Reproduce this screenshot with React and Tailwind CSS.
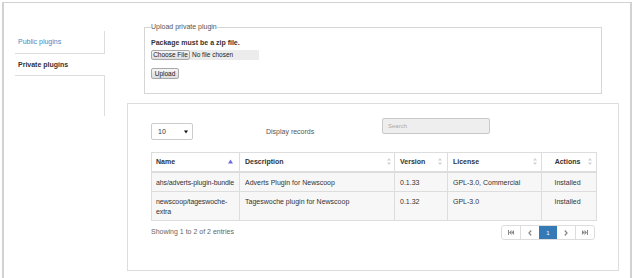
import React from "react";

const ROWS = [
  {
    name: "ahs/adverts-plugin-bundle",
    description: "Adverts Plugin for Newscoop",
    version: "0.1.33",
    license: "GPL-3.0, Commercial",
    action: "Installed",
    tall: false,
  },
  {
    name: "newscoop/tageswoche-extra",
    description: "Tageswoche plugin for Newscoop",
    version: "0.1.32",
    license: "GPL-3.0",
    action: "Installed",
    tall: true,
  },
];

function SortBoth() {
  return (
    <svg width="4" height="7" viewBox="0 0 4 7" className="shrink-0">
      <path d="M2 0 L4 2.6 L0 2.6 Z" fill="#d2d2d2" />
      <path d="M2 7 L4 4.4 L0 4.4 Z" fill="#d2d2d2" />
    </svg>
  );
}

function SortAsc() {
  return (
    <svg width="5" height="5" viewBox="0 0 5 5" className="shrink-0">
      <path d="M2.5 0.5 L5 4.5 L0 4.5 Z" fill="#6c6cd9" />
    </svg>
  );
}

function PageIcon({ kind }) {
  const c = "#8a8a8a";
  if (kind === "first")
    return (
      <svg width="6" height="5" viewBox="0 0 6 5">
        <rect x="0" y="0" width="1" height="5" fill={c} />
        <path d="M1 2.5 L3.5 0 L3.5 5 Z" fill={c} />
        <path d="M3.5 2.5 L6 0 L6 5 Z" fill={c} />
      </svg>
    );
  if (kind === "last")
    return (
      <svg width="6" height="5" viewBox="0 0 6 5">
        <path d="M0 0 L2.5 2.5 L0 5 Z" fill={c} />
        <path d="M2.5 0 L5 2.5 L2.5 5 Z" fill={c} />
        <rect x="5" y="0" width="1" height="5" fill={c} />
      </svg>
    );
  if (kind === "prev")
    return (
      <svg width="4" height="6" viewBox="0 0 4 6">
        <path d="M3.2 0.5 L1 3 L3.2 5.5" stroke={c} strokeWidth="1.3" fill="none" />
      </svg>
    );
  return (
    <svg width="4" height="6" viewBox="0 0 4 6">
      <path d="M0.8 0.5 L3 3 L0.8 5.5" stroke={c} strokeWidth="1.3" fill="none" />
    </svg>
  );
}

export default function App() {
  return (
    <div className="w-[635px] h-[278px] overflow-hidden bg-white font-['Liberation_Sans',Arial,sans-serif] text-[7px] leading-[10px] text-[#333]">
      <div className="ml-[2px] mt-[2px] w-[630px] h-[300px] border-l-2 border-t border-r-2 border-[#d2d2d2] flex">
        {/* side tabs */}
        <nav className="ml-[11px] mt-[28px] w-[90px] shrink-0">
          <div className="h-[23px] border-b border-r border-[#ddd] flex items-center pl-[3px] text-[#428bca]">
            Public plugins
          </div>
          <div className="h-[22px] border-b border-[#ddd] flex items-center pl-[3px] font-bold">
            Private plugins
          </div>
          <div className="h-[40px] border-r border-[#ddd]"></div>
        </nav>

        <main className="ml-[22px] w-[492px] shrink-0">
          <fieldset className="mt-[19px] ml-[17px] w-[458px] border border-[#d6d6d6] px-[6px] pb-[14px]">
            <legend className="px-0 text-[#555] leading-[10px]">Upload private plugin</legend>
            <p className="mt-[6px] font-bold">Package must be a zip file.</p>
            <div className="mt-[2px] flex h-[10px]">
              <button className="w-[39px] h-[10px] border border-[#a9a9a9] rounded-[2px] bg-gradient-to-b from-[#f6f6f6] to-[#dcdcdc] text-[6.5px] leading-[8px] text-[#222]">
                Choose File
              </button>
              <span className="w-[69px] h-[10px] bg-[#ececec] pl-[2px] text-[6.5px] leading-[10px] text-[#222]">
                No file chosen
              </span>
            </div>
            <button className="mt-[8px] block w-[28px] h-[11px] border border-[#a9a9a9] rounded-[2px] bg-gradient-to-b from-[#f6f6f6] to-[#dcdcdc] text-[6.5px] leading-[9px] text-[#222]">
              Upload
            </button>
          </fieldset>

          <section className="mt-[9px] w-[492px] h-[168px] border border-[#ddd] pl-[23px] pt-[14px]">
            <div className="flex items-start">
              <div className="mt-[5px] w-[42px] h-[17px] border border-[#ccc] rounded-[2px] flex items-center justify-between pl-[6px] pr-[4px]">
                <span>10</span>
                <svg width="4" height="4" viewBox="0 0 4 4">
                  <path d="M0 0.5 L4 0.5 L2 3.5 Z" fill="#111" />
                </svg>
              </div>
              <span className="ml-[73px] mt-[9px] w-[116px] text-[#555]">Display records</span>
              <div className="w-[108px] h-[16px] border border-[#c8c8c8] rounded-[2px] bg-[#eeeeee] pl-[5px] flex items-center text-[6px] text-[#aaa]">
                Search
              </div>
            </div>

            <table className="mt-[12px] w-[445px] table-fixed border-collapse border border-[#ddd]">
              <colgroup>
                <col className="w-[88px]" />
                <col className="w-[155px]" />
                <col className="w-[53px]" />
                <col className="w-[94px]" />
                <col className="w-[55px]" />
              </colgroup>
              <thead>
                <tr className="h-[19px] border-b-2 border-[#ddd]">
                  <th className="border-r border-[#ddd] pl-[4px] pr-[5px] font-bold text-left">
                    <div className="flex items-center justify-between pr-[1px]">
                      <span>Name</span>
                      <SortAsc />
                    </div>
                  </th>
                  <th className="border-r border-[#ddd] pl-[5px] pr-[3px] font-bold text-left">
                    <div className="flex items-center justify-between">
                      <span>Description</span>
                      <SortBoth />
                    </div>
                  </th>
                  <th className="border-r border-[#ddd] pl-[5px] pr-[5px] font-bold text-left">
                    <div className="flex items-center justify-between">
                      <span>Version</span>
                      <SortBoth />
                    </div>
                  </th>
                  <th className="border-r border-[#ddd] pl-[5px] pr-[4px] font-bold text-left">
                    <div className="flex items-center justify-between">
                      <span>License</span>
                      <SortBoth />
                    </div>
                  </th>
                  <th className="pl-[5px] pr-[4px] font-bold">
                    <div className="flex items-center">
                      <span className="flex-1 text-center">Actions</span>
                      <SortBoth />
                    </div>
                  </th>
                </tr>
              </thead>
              <tbody>
                {ROWS.map((r) => (
                  <tr
                    key={r.name}
                    className={`${r.tall ? "h-[29px]" : "h-[20px]"} bg-[#f7f7f7] border-t border-[#ddd]`}
                  >
                    <td className="border-r border-[#ddd] pl-[4px] pr-0 pt-[5px] align-top whitespace-nowrap tracking-[-0.1px]">
                      {r.tall ? (
                        <>
                          newscoop/tageswoche-
                          <br />
                          extra
                        </>
                      ) : (
                        r.name
                      )}
                    </td>
                    <td className="border-r border-[#ddd] px-[5px] pt-[5px] align-top">{r.description}</td>
                    <td className="border-r border-[#ddd] px-[5px] pt-[5px] align-top">{r.version}</td>
                    <td className="border-r border-[#ddd] px-[5px] pt-[5px] align-top">{r.license}</td>
                    <td className="px-[5px] pt-[5px] align-top text-center pr-[8px]">{r.action}</td>
                  </tr>
                ))}
              </tbody>
            </table>

            <div className="mt-[4px] w-[445px] flex items-start justify-between">
              <span className="mt-[2px] text-[#666]">Showing 1 to 2 of 2 entries</span>
              <div className="flex h-[15px] border border-[#ddd] rounded-[3px] overflow-hidden mr-[1px]">
                <div className="w-[18px] flex items-center justify-center">
                  <PageIcon kind="first" />
                </div>
                <div className="w-[19px] border-l border-[#ddd] flex items-center justify-center">
                  <PageIcon kind="prev" />
                </div>
                <div className="w-[18px] bg-[#337ab7] flex items-center justify-center text-white text-[6px]">
                  1
                </div>
                <div className="w-[19px] border-r border-[#ddd] flex items-center justify-center">
                  <PageIcon kind="next" />
                </div>
                <div className="w-[18px] flex items-center justify-center">
                  <PageIcon kind="last" />
                </div>
              </div>
            </div>
          </section>
        </main>
      </div>
    </div>
  );
}
